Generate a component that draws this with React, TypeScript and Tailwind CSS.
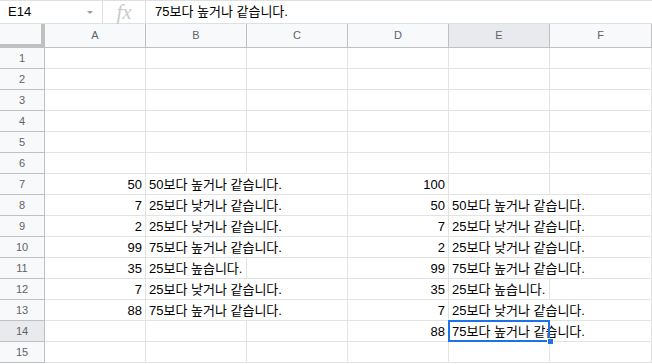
import React from "react";

const cols = ["A", "B", "C", "D", "E", "F"];

type Row = { [k: string]: string };
const data: Record<number, Row> = {
  7: { A: "50", B: "50보다 높거나 같습니다.", D: "100" },
  8: { A: "7", B: "25보다 낮거나 같습니다.", D: "50", E: "50보다 높거나 같습니다." },
  9: { A: "2", B: "25보다 낮거나 같습니다.", D: "7", E: "25보다 낮거나 같습니다." },
  10: { A: "99", B: "75보다 높거나 같습니다.", D: "2", E: "25보다 낮거나 같습니다." },
  11: { A: "35", B: "25보다 높습니다.", D: "99", E: "75보다 높거나 같습니다." },
  12: { A: "7", B: "25보다 낮거나 같습니다.", D: "35", E: "25보다 높습니다." },
  13: { A: "88", B: "75보다 높거나 같습니다.", D: "7", E: "25보다 낮거나 같습니다." },
  14: { D: "88", E: "75보다 높거나 같습니다." },
};

const numCols = new Set(["A", "D"]);

export default function App() {
  const rows = Array.from({ length: 15 }, (_, i) => i + 1);
  const font = { fontFamily: '"Liberation Sans", Arial, "Noto Sans CJK KR", sans-serif' };
  return (
    <div className="w-[652px] h-[364px] bg-white overflow-hidden text-black" style={font}>
      {/* formula bar */}
      <div className="flex h-[24px] border-t border-[#e0e0e0] border-b border-b-[#e0e0e0] items-center">
        <div className="w-[103px] h-full flex items-center justify-between pl-[8px] pr-[8px] border-r border-[#e0e0e0]">
          <span className="text-[13px]">E14</span>
          <svg width="8" height="5" viewBox="0 0 8 5"><path d="M1 1 L4 4 L7 1 Z" fill="#9aa0a6" /></svg>
        </div>
        <div className="w-[43px] h-full flex items-center justify-center border-r border-[#e0e0e0]">
          <span className="text-[21px] italic text-[#c8cacc] leading-none" style={{ fontFamily: '"Liberation Serif", serif' }}>fx</span>
        </div>
        <div className="pl-[9px] text-[13px]">75보다 높거나 같습니다.</div>
      </div>
      {/* grid */}
      <div className="grid grid-cols-[45px_101px_101px_101px_101px_101px_102px] grid-rows-[24px_repeat(15,21px)]">
        {/* header row */}
        <div className="bg-[#f8f9fa] border-r-[4px] border-b-[4px] border-[#c0c0c0]" />
        {cols.map((c) => (
          <div
            key={c}
            className={`flex items-center justify-center text-[11px] text-[#5f6368] border-r border-b border-[#c0c0c0] ${c === "E" ? "bg-[#e8eaed]" : "bg-[#f8f9fa]"}`}
          >
            {c}
          </div>
        ))}
        {rows.map((r) => (
          <React.Fragment key={r}>
            <div
              className={`flex items-center justify-center text-[11px] text-[#5f6368] border-r border-b border-[#c0c0c0] ${r === 14 ? "bg-[#e8eaed]" : "bg-[#f8f9fa]"}`}
            >
              {r}
            </div>
            {cols.map((c) => {
              const v = data[r]?.[c];
              const sel = r === 14 && c === "E";
              const overflow = !!v && !numCols.has(c) && v !== "25보다 높습니다.";
              return (
                <div
                  key={c}
                  className={`relative flex items-center text-[13px] whitespace-nowrap border-b border-[#e2e3e3] ${overflow ? "border-r-0 overflow-visible z-10" : "border-r overflow-hidden"} ${numCols.has(c) ? "justify-end pr-[3px]" : "pl-[3px]"}`}
                >
                  <span className="leading-none">{v ?? ""}</span>
                  {sel && (
                    <>
                      <div className="absolute left-[-1px] top-[-1px] w-[102px] h-[22px] border-2 border-[#1a73e8] pointer-events-none" />
                      <div className="absolute right-[-4px] bottom-[-4px] w-[7px] h-[7px] bg-[#1a73e8] border border-white" />
                    </>
                  )}
                </div>
              );
            })}
          </React.Fragment>
        ))}
      </div>
    </div>
  );
}
